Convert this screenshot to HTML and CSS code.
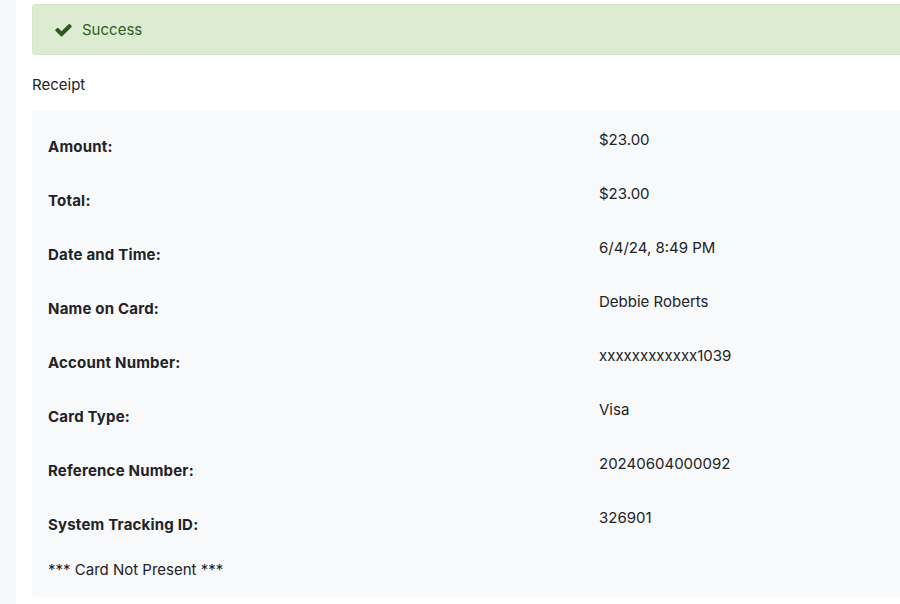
FILE: index.html
```html
<!DOCTYPE html>
<html>
<head>
<meta charset="utf-8">
<link rel="stylesheet" href="styles.css">
</head>
<body>
<div class="page">
  <aside class="side"></aside>
  <main class="main">
    <div class="alert">
      <svg class="check" viewBox="0 250 1700 1300" width="18" height="14" aria-hidden="true"><path fill="currentColor" d="M1671 566q0 40-28 68l-724 724-136 136q-28 28-68 28t-68-28l-136-136-362-362q-28-28-28-68t28-68l136-136q28-28 68-28t68 28l294 295 656-657q28-28 68-28t68 28l136 136q28 28 28 68z"/></svg>
      <span>Success</span>
    </div>
    <div class="title">Receipt</div>
    <section class="card">
      <div class="row"><div class="label">Amount:</div><div class="value">$23.00</div></div>
      <div class="row"><div class="label">Total:</div><div class="value">$23.00</div></div>
      <div class="row"><div class="label">Date and Time:</div><div class="value">6/4/24, 8:49 PM</div></div>
      <div class="row"><div class="label">Name on Card:</div><div class="value">Debbie Roberts</div></div>
      <div class="row"><div class="label">Account Number:</div><div class="value">xxxxxxxxxxxx1039</div></div>
      <div class="row"><div class="label">Card Type:</div><div class="value">Visa</div></div>
      <div class="row"><div class="label">Reference Number:</div><div class="value">20240604000092</div></div>
      <div class="row"><div class="label">System Tracking ID:</div><div class="value">326901</div></div>
      <div class="footer">*** Card Not Present ***</div>
    </section>
  </main>
</div>
</body>
</html>
```
FILE: styles.css
```css
html, body {
  margin: 0;
  padding: 0;
  background: #ffffff;
  font-family: Inter, "Liberation Sans", sans-serif;
  font-size: 15px;
  color: #222326;
}
.page {
  display: flex;
  min-height: 604px;
}
.side {
  width: 16px;
  flex: none;
  background: #f7f8fa;
}
.main {
  flex: 1;
  padding: 4px 0 0 16px;
  min-width: 0;
}
.alert {
  height: 49px;
  display: flex;
  align-items: center;
  gap: 10px;
  padding-left: 21px;
  background: #deebd3;
  border: 1px solid #d5e6c9;
  border-right: none;
  border-radius: 4px 0 0 4px;
  color: #2f5c22;
  font-size: 15px;
}
.check {
  display: block;
  color: #2c5a1d;
  margin-top: 1px;
}
.title {
  line-height: 20px;
  padding: 20px 0 16px 0;
}
.card {
  background: #f8f9fb;
  border-radius: 4px 0 0 4px;
  padding: 8px 0 17px 16px;
}
.row {
  display: grid;
  grid-template-columns: 551px 1fr;
  height: 54px;
  line-height: 20px;
}
.label {
  font-weight: 700;
  letter-spacing: 0.2px;
  padding-top: 18px;
}
.value {
  padding-top: 11px;
}
.footer {
  line-height: 20px;
  padding-top: 9px;
}
```
